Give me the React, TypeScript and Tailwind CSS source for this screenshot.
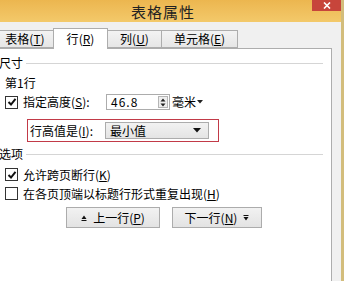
import React from "react";

const font = { fontFamily: '"Noto Sans CJK SC", "Noto Sans", sans-serif' };

function Acc({ label, k }: { label: string; k: string }) {
  return (
    <span>
      {label}(<span className="underline underline-offset-1">{k}</span>)
    </span>
  );
}

function Check({ on }: { on?: boolean }) {
  return (
    <div className="flex h-[13px] w-[13px] shrink-0 items-center justify-center border border-[#333] bg-white">
      {on && (
        <svg width="10" height="10" viewBox="0 0 10 10">
          <path d="M1.5 5 L4 7.5 L8.5 1.8" fill="none" stroke="#111" strokeWidth="2" />
        </svg>
      )}
    </div>
  );
}

function Tab({ w, children, active, cls = "" }: { w: string; children: React.ReactNode; active?: boolean; cls?: string }) {
  if (active) {
    return (
      <div
        className={`relative z-10 -mb-px flex h-[21px] items-center justify-center border border-b-0 border-[#adadad] bg-white ${w} ${cls}`}
      >
        {children}
      </div>
    );
  }
  return (
    <div
      className={`flex h-[18px] items-center justify-center border border-[#adadad] bg-gradient-to-b from-[#f3f3f3] to-[#e6e6e6] ${w} ${cls}`}
    >
      {children}
    </div>
  );
}

function GroupLabel({ text }: { text: string }) {
  return (
    <div className="-ml-[6px] flex h-[12px] items-center gap-[3px] pr-[8px]">
      <span className="leading-[12px]">{text}</span>
      <div className="h-px flex-1 bg-[#d5d5d5]" />
    </div>
  );
}

export default function App() {
  return (
    <div className="flex h-[281px] w-[349px] overflow-hidden bg-white text-[12px] text-black" style={font}>
      <div className="flex h-full w-[344px] flex-col border-r-[3px] border-[#d3bd7c] bg-[#f0f0f0]">
        {/* title bar */}
        <div className="relative flex h-[22px] shrink-0 items-center bg-gradient-to-b from-[#ecb64f] to-[#f3c96a] pl-[131px]">
          <span className="text-[15px] leading-none tracking-[1px] text-[#222]">表格属性</span>
          <div className="absolute right-0 top-0 flex h-[11px] w-[29px] items-center justify-center bg-[#c7453b]">
            <svg width="8" height="7" viewBox="0 0 8 7">
              <path d="M1 0.5 L7 6.5 M7 0.5 L1 6.5" stroke="#fff" strokeWidth="1.6" />
            </svg>
          </div>
        </div>

        <div className="flex flex-1 flex-col pr-[9px] pt-[5px]">
          {/* tabs */}
          <div className="-ml-[8px] flex h-[21px] items-end">
            <Tab w="w-[62px]">
              <span className="pl-[4px]">
                <Acc label="表格" k="T" />
              </span>
            </Tab>
            <Tab w="w-[55px]" active cls="-ml-px">
              <Acc label="行" k="R" />
            </Tab>
            <Tab w="w-[55px]" cls="-ml-px">
              <Acc label="列" k="U" />
            </Tab>
            <Tab w="w-[77px]" cls="-ml-px">
              <Acc label="单元格" k="E" />
            </Tab>
          </div>

          {/* panel */}
          <div className="flex flex-1 flex-col border-r border-t border-[#adadad] bg-white pl-[5px] pt-[8px]">
            <GroupLabel text="尺寸" />

            <div className="mt-[8px] h-[12px] leading-[12px]">第1行</div>

            <div className="mt-[5px] flex h-[16px] items-center">
              <Check on />
              <div className="ml-[5px] w-[83px]">
                <Acc label="指定高度" k="S" />:
              </div>
              <div className="flex h-[16px] w-[64px] items-center border border-[#acacac] bg-white">
                <span className="flex-1 pl-[4px] tracking-[1px]">46.8</span>
                <div className="mr-px flex h-[12px] w-[10px] items-center justify-center border border-[#b5b5b5] bg-[#eee]">
                  <svg width="6" height="9" viewBox="0 0 6 9">
                    <path d="M3 0.5 L5.5 3.5 H0.5 Z M3 8.5 L5.5 5.5 H0.5 Z" fill="#222" />
                  </svg>
                </div>
              </div>
              <span className="ml-[2px]">毫米</span>
              <svg className="ml-[1px]" width="6" height="4" viewBox="0 0 6 4">
                <path d="M0 0 H6 L3 3.5 Z" fill="#222" />
              </svg>
            </div>

            <div className="ml-[22px] mt-[9px] flex h-[23px] w-[192px] items-center border border-[#c23a48] pl-[2px]">
              <div className="w-[75px]">
                <Acc label="行高值是" k="I" />:
              </div>
              <div className="flex h-[17px] w-[104px] items-center border border-[#acacac] bg-gradient-to-b from-[#f2f2f2] to-[#e4e4e4] pl-[4px] pr-[7px]">
                <span className="flex-1">最小值</span>
                <svg width="8" height="5" viewBox="0 0 8 5">
                  <path d="M0 0 H8 L4 4.5 Z" fill="#111" />
                </svg>
              </div>
            </div>

            <div className="mt-[6px]">
              <GroupLabel text="选项" />
            </div>

            <div className="mt-[8px] flex h-[13px] items-center gap-[5px]">
              <Check on />
              <Acc label="允许跨页断行" k="K" />
            </div>

            <div className="mt-[6px] flex h-[13px] items-center gap-[5px]">
              <Check />
              <Acc label="在各页顶端以标题行形式重复出现" k="H" />
            </div>

            <div className="ml-[61px] mt-[7px] flex gap-[12px]">
              <button className="flex h-[21px] w-[94px] items-center justify-center gap-[6px] border border-[#acacac] bg-gradient-to-b from-[#f2f2f2] to-[#e3e3e3] text-[12px]">
                <svg width="6" height="6" viewBox="0 0 6 6">
                  <path d="M3 0.5 L5.5 4 H0.5 Z M0.5 5 H5.5 V6 H0.5 Z" fill="#111" />
                </svg>
                <Acc label="上一行" k="P" />
              </button>
              <button className="flex h-[21px] w-[90px] items-center justify-center gap-[6px] border border-[#acacac] bg-gradient-to-b from-[#f2f2f2] to-[#e3e3e3] text-[12px]">
                <Acc label="下一行" k="N" />
                <svg width="6" height="6" viewBox="0 0 6 6">
                  <path d="M0.5 0 H5.5 V1 H0.5 Z M0.5 2 H5.5 L3 5.5 Z" fill="#111" />
                </svg>
              </button>
            </div>
          </div>
        </div>
      </div>
    </div>
  );
}
